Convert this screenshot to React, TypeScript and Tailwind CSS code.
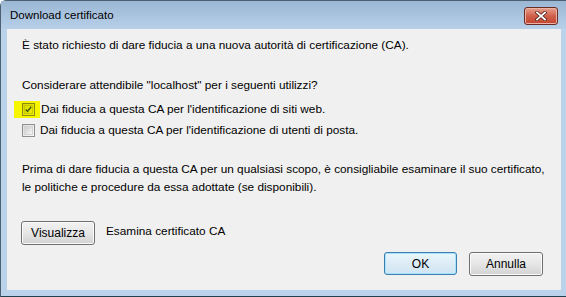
import React from "react";

// Win7-style "Download certificato" dialog

function Checkbox({ checked, marked }: { checked?: boolean; marked?: boolean }) {
    return (
        <div
            className={
                marked
                    ? "w-[13px] h-[13px] border border-[#8a8a14] bg-linear-to-br from-[#d8d800] to-[#f4f400] flex items-center justify-center"
                    : "w-[13px] h-[13px] border border-[#8e8f8f] bg-linear-to-br from-[#dcdcdc] to-[#fafafa] flex items-center justify-center"
            }
        >
            <div
                className={
                    marked
                        ? "w-[9px] h-[9px] border border-[#c8c800] flex items-center justify-center"
                        : "w-[9px] h-[9px] border border-[#d4d4d4] bg-linear-to-br from-[#cbcbcb] to-[#f6f6f6]"
                }
            >
                {checked && (
                    <svg width="9" height="9" viewBox="0 0 9 9" className="-mt-[1px]">
                        <path d="M1 4.5 L3.3 7 L8 1" stroke="#3f5a0c" strokeWidth="1.8" fill="none" />
                    </svg>
                )}
            </div>
        </div>
    );
}

function Button({ label, isDefault }: { label: string; isDefault?: boolean }) {
    return (
        <div
            className={
                isDefault
                    ? "w-[73px] h-[23px] rounded-[3px] border border-[#3c7fb1] shadow-[inset_0_0_0_1px_#a6e3fb] bg-linear-to-b from-[#eaf6fd] via-[#dcecf7] to-[#cfe4f2] flex items-center justify-center"
                    : "w-[74px] h-[24px] rounded-[3px] border border-[#707070] shadow-[inset_0_0_0_1px_#fbfbfb] bg-linear-to-b from-[#f2f2f2] via-[#e6e6e6] to-[#d2d2d2] flex items-center justify-center"
            }
        >
            <span className="text-[12px] text-black leading-none">{label}</span>
        </div>
    );
}

export default function App() {
    return (
        <div className="w-[566px] h-[297px] overflow-hidden bg-white" style={{ fontFamily: "'Liberation Sans', Arial, sans-serif" }}>
            <div className="w-[566px] h-[297px] flex flex-col bg-[#bad3eb] border border-[#4d6072] border-r-0 rounded-tl-[6px] border-b-[#21414e]">
                {/* title bar */}
                <div className="h-[28px] shrink-0 flex items-center justify-between bg-linear-to-b from-[#9bb7d4] to-[#b8d0e9] pl-[9px] pr-[8px]">
                    <span className="text-[11.5px] text-black pt-[2px]">Download certificato</span>
                    <div className="w-[34px] h-[18px] mt-[2px] rounded-[3px] border border-[#6a2d24] bg-linear-to-b from-[#e7a08f] via-[#d0604b] to-[#c3442f] shadow-[inset_0_0_0_1px_#eab3a6] flex items-center justify-center">
                        <svg width="12" height="10" viewBox="0 0 12 10">
                            <path d="M2 1.5 L10 8.5 M10 1.5 L2 8.5" stroke="#4d2018" strokeWidth="3.4" strokeLinecap="square" />
                            <path d="M2 1.5 L10 8.5 M10 1.5 L2 8.5" stroke="#ffffff" strokeWidth="1.8" strokeLinecap="square" />
                        </svg>
                    </div>
                </div>

                {/* client area */}
                <div className="flex-1 ml-[6px] mr-[5px] mb-[6px] bg-[#f0f0f0] flex flex-col pl-[15px] pr-[18px] pt-[9px] pb-[14px] text-[11.8px] leading-[15px] text-black">
                    <p>È stato richiesto di dare fiducia a una nuova autorità di certificazione (CA).</p>

                    <p className="mt-[25px]">Considerare attendibile "localhost" per i seguenti utilizzi?</p>

                    <div className="mt-[6px] flex flex-col">
                        <div className="h-[21px] flex items-center -ml-[8px]">
                            <div className="h-[17px] w-[26px] bg-[#f6f600] flex items-center pl-[8px]">
                                <Checkbox checked marked />
                            </div>
                            <span className="ml-[1px]">Dai fiducia a questa CA per l'identificazione di siti web.</span>
                        </div>
                        <div className="h-[21px] flex items-center">
                            <Checkbox />
                            <span className="ml-[5px]">Dai fiducia a questa CA per l'identificazione di utenti di posta.</span>
                        </div>
                    </div>

                    <p className="mt-[19px] leading-[18px] whitespace-nowrap -mr-[16px]">
                        Prima di dare fiducia a questa CA per un qualsiasi scopo, è consigliabile esaminare il suo certificato,
                        <br />
                        le politiche e procedure da essa adottate (se disponibili).
                    </p>

                    <div className="mt-[25px] flex items-start -ml-[1px]">
                        <Button label="Visualizza" />
                        <span className="ml-[11px] mt-[3px]">Esamina certificato CA</span>
                    </div>

                    <div className="flex-1" />

                    <div className="flex justify-end gap-[12px]">
                        <Button label="OK" isDefault />
                        <Button label="Annulla" />
                    </div>
                </div>
            </div>
        </div>
    );
}
